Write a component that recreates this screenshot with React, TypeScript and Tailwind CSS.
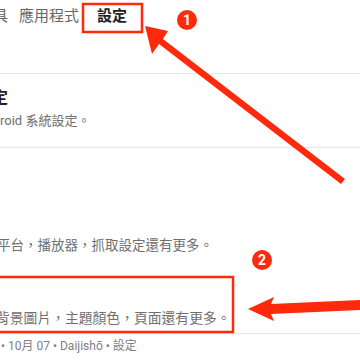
import React from "react";

const RED = "#ff2a0c";

function Badge({ cx, cy, n }: { cx: number; cy: number; n: string }) {
  return (
    <g>
      <circle cx={cx} cy={cy} r={10} fill={RED} />
      <text
        x={cx}
        y={cy + 5}
        textAnchor="middle"
        fontSize="14"
        fontWeight="700"
        fill="#fff"
        fontFamily="Roboto, sans-serif"
      >
        {n}
      </text>
    </g>
  );
}

function Annotations() {
  return (
    <svg className="pointer-events-none absolute inset-0" width={360} height={360} viewBox="0 0 360 360">
      {/* box around the settings tab */}
      <rect x={83} y={4} width={59} height={28} fill="none" stroke={RED} strokeWidth={2.5} />
      <Badge cx={187} cy={20} n="1" />
      {/* diagonal arrow */}
      <polygon points="145,26 168,31 163,39 345,179 341,184 159,44 152,54" fill={RED} />
      {/* box around the theme row */}
      <rect x={-5} y={277} width={238} height={55} fill="none" stroke={RED} strokeWidth={2.5} />
      <Badge cx={262} cy={260} n="2" />
      {/* horizontal arrow */}
      <polygon points="248,309 274,297 271,304 362,300 362,310 271,314 274,321" fill={RED} />
    </svg>
  );
}

export default function App() {
  return (
    <div
      className="relative h-[360px] w-[360px] overflow-hidden bg-white"
      style={{ fontFamily: "Roboto, 'Noto Sans CJK TC', sans-serif" }}
    >
      <div className="flex h-[32px] items-center whitespace-nowrap text-[15px] text-[#666]">
        <span className="ml-[-7px]">具</span>
        <span className="ml-[11px]">應用程式</span>
        <span className="ml-[18px] font-bold text-[#222]">設定</span>
      </div>
      <div className="h-[42px] border-b border-[#e6e6e6]" />

      <div className="h-[74px] border-b border-[#e6e6e6] pt-[14px] whitespace-nowrap">
        <div className="ml-[-24px] h-[20px] text-[16px] leading-[20px] font-bold text-[#222]">設定</div>
        <div className="ml-[-23px] mt-[4px] h-[18px] text-[13px] leading-[18px] text-[#707070]">Android 系統設定。</div>
      </div>

      <div className="h-[129px] pt-[88px] whitespace-nowrap">
        <div className="ml-[-3px] h-[18px] text-[13.5px] leading-[18px] text-[#707070]">
          平台，播放器，抓取設定還有更多。
        </div>
      </div>

      <div className="h-[57px] border-b border-[#e6e6e6] pt-[32px] whitespace-nowrap">
        <div className="ml-[-4px] h-[18px] text-[13.8px] leading-[18px] text-[#707070]">
          背景圖片，主題顏色，頁面還有更多。
        </div>
      </div>

      <div className="flex h-[24px] items-center whitespace-nowrap text-[12px] text-[#808080]">
        <span className="ml-[1px]">• 10月 07 • Daijishō • 設定</span>
      </div>

      <Annotations />
    </div>
  );
}
